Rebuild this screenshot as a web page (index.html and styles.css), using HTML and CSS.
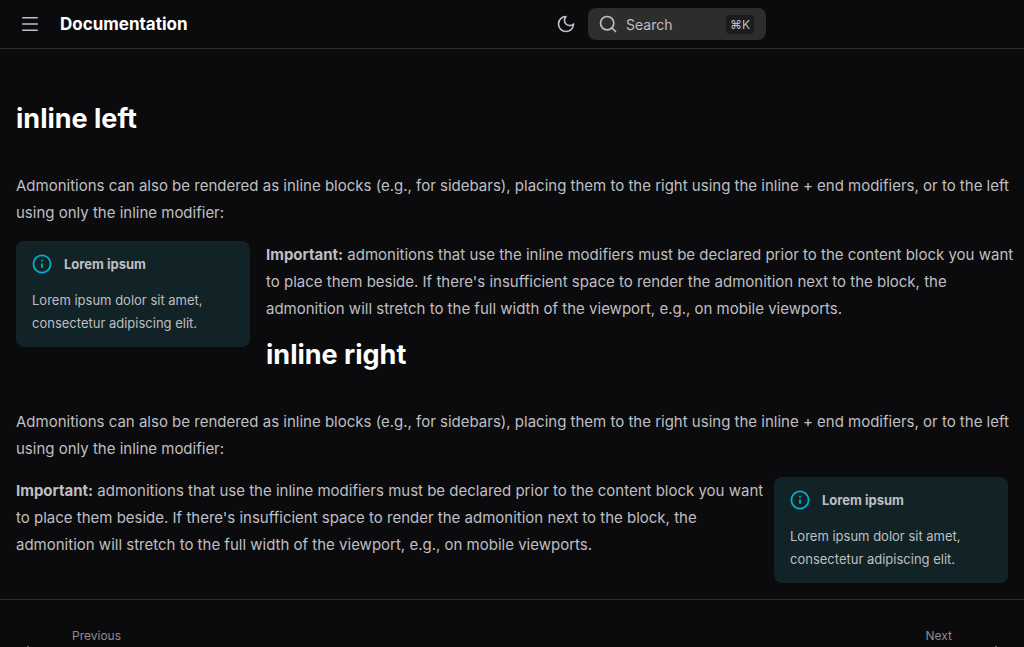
FILE: index.html
```html
<!DOCTYPE html>
<html lang="en">
<head>
  <meta charset="UTF-8">
  <meta name="viewport" content="width=device-width, initial-scale=1.0">
  <title>Documentation</title>
  <link rel="stylesheet" href="styles.css">
</head>
<body>
  <header class="header">
    <button type="button" class="icon-button" aria-label="Menu">
      <svg width="24" height="24" viewBox="0 0 24 24" fill="none" stroke="currentColor" stroke-width="1.6">
        <path d="M4.200 5.800h15.600M4.200 12h15.600M4.200 18.200h15.600"/>
      </svg>
    </button>
    <a class="title" href="#">Documentation</a>
    <button type="button" class="icon-button theme" aria-label="Switch theme">
      <svg width="20" height="20" viewBox="0 0 24 24" fill="none" stroke="currentColor" stroke-width="2" stroke-linecap="round" stroke-linejoin="round">
        <path d="M12 3a6 6 0 0 0 9 9 9 9 0 1 1-9-9Z"/>
      </svg>
    </button>
    <form class="search">
      <svg width="20" height="20" viewBox="0 0 24 24" fill="none" stroke="currentColor" stroke-width="2" stroke-linecap="round">
        <circle cx="11" cy="11" r="8"/>
        <path d="m21 21-4.300-4.300"/>
      </svg>
      <input type="text" placeholder="Search" aria-label="Search">
      <kbd>⌘K</kbd>
    </form>
  </header>

  <main class="content">
    <h1>inline left</h1>
    <p>Admonitions can also be rendered as inline blocks (e.g., for sidebars), placing them to the right using the inline + end modifiers, or to the left using only the inline modifier:</p>
    <aside class="admonition inline">
      <div class="admonition-title">
        <svg width="20" height="20" viewBox="0 0 20 20" fill="none" stroke="currentColor" stroke-width="1.8">
          <circle cx="10" cy="10" r="8.6"/>
          <path d="M10 9.4v4.4M10 6v1.6"/>
        </svg>
        Lorem ipsum
      </div>
      <p>Lorem ipsum dolor sit amet, consectetur adipiscing elit.</p>
    </aside>
    <p><strong>Important:</strong> admonitions that use the inline modifiers must be declared prior to the content block you want to place them beside. If there's insufficient space to render the admonition next to the block, the admonition will stretch to the full width of the viewport, e.g., on mobile viewports.</p>

    <h1>inline right</h1>
    <p>Admonitions can also be rendered as inline blocks (e.g., for sidebars), placing them to the right using the inline + end modifiers, or to the left using only the inline modifier:</p>
    <aside class="admonition inline end">
      <div class="admonition-title">
        <svg width="20" height="20" viewBox="0 0 20 20" fill="none" stroke="currentColor" stroke-width="1.8">
          <circle cx="10" cy="10" r="8.6"/>
          <path d="M10 9.4v4.4M10 6v1.6"/>
        </svg>
        Lorem ipsum
      </div>
      <p>Lorem ipsum dolor sit amet, consectetur adipiscing elit.</p>
    </aside>
    <p><strong>Important:</strong> admonitions that use the inline modifiers must be declared prior to the content block you want to place them beside. If there's insufficient space to render the admonition next to the block, the admonition will stretch to the full width of the viewport, e.g., on mobile viewports.</p>
  </main>

  <footer class="footer">
    <a class="footer-link" href="#">
      <svg width="24" height="24" viewBox="0 0 24 24" fill="currentColor">
        <path d="M20 11v2H8l5.500 5.500-1.420 1.420L4.160 12l7.920-7.920L13.500 5.500 8 11h12Z"/>
      </svg>
      <span>Previous</span>
    </a>
    <a class="footer-link" href="#">
      <span>Next</span>
      <svg width="24" height="24" viewBox="0 0 24 24" fill="currentColor">
        <path d="M4 11v2h12l-5.500 5.500 1.420 1.420L19.840 12l-7.920-7.920L10.500 5.500 16 11H4Z"/>
      </svg>
    </a>
  </footer>
</body>
</html>
```

FILE: styles.css
```css
* {
  box-sizing: border-box;
}
body {
  margin: 0;
  font-family: Inter, sans-serif;
  font-size: 15px;
  line-height: 27px;
  color: #bfbfc3;
  background-color: #0b0b0d;
}
.header {
  display: flex;
  align-items: center;
  height: 49px;
  padding: 0 16px;
  border-bottom: 1px solid #2e2e30;
}
.icon-button {
  display: flex;
  padding: 2px;
  border: none;
  background: none;
  color: #bfbfc3;
  cursor: pointer;
}
.title {
  margin-left: 16px;
  font-size: 17px;
  font-weight: 700;
  line-height: 26px;
  color: white;
  text-decoration: none;
}
.theme {
  margin-left: auto;
  margin-right: 10px;
}
.search {
  display: flex;
  align-items: center;
  width: 178px;
  height: 32px;
  margin-right: 242px;
  padding: 0 12px 0 10px;
  border-radius: 8px;
  background-color: #2d2d2e;
}
.search svg {
  flex: none;
}
.search input {
  flex: 1;
  min-width: 0;
  padding: 0 8px;
  border: none;
  outline: none;
  background: none;
  font-family: inherit;
  font-size: 14px;
  color: #bfbfc3;
}
.search input::placeholder {
  color: #bfbfc3;
}
.search kbd {
  padding: 0 4px;
  border-radius: 4px;
  background-color: #1c1c1d;
  font-family: inherit;
  font-size: 12px;
  line-height: 19px;
}
.content {
  display: flow-root;
  padding: 52px 8px 16px 16px;
}
h1 {
  margin: 15px 0 36px;
  font-size: 27px;
  line-height: 35px;
  color: white;
}
.content > h1:first-child {
  margin-top: 0;
}
.content p {
  margin: 0 0 15px;
}
.admonition {
  padding: 0 16px 12px;
  border-radius: 8px;
  background-color: #122327;
  font-size: 13px;
  line-height: 23px;
}
.admonition.inline {
  float: left;
  width: 234px;
  margin-right: 16px;
}
.admonition.end {
  float: right;
  margin: 0 8px;
}
.admonition-title {
  display: flex;
  align-items: center;
  gap: 12px;
  height: 46px;
  margin-bottom: 2px;
  font-weight: 700;
}
.admonition-title svg {
  color: #00b0cc;
}
.content .admonition p {
  margin: 0;
}
.footer {
  display: flex;
  justify-content: space-between;
  height: 80px;
  padding: 24px 16px 0;
  border-top: 1px solid #2e2e30;
}
.footer-link {
  display: flex;
  gap: 32px;
  font-size: 12px;
  line-height: 24px;
  color: #8c8c90;
  text-decoration: none;
}
.footer-link svg {
  margin-top: 18px;
  color: #bfbfc3;
}
```
